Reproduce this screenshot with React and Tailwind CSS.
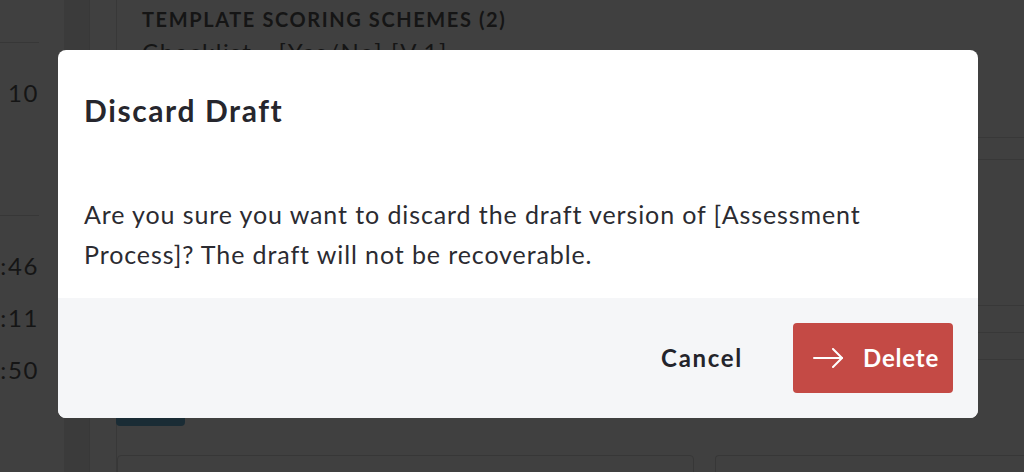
import { useState } from "react";

function ArrowIcon() {
  return (
    <svg width="30" height="20" viewBox="0 0 30 20" fill="none" stroke="white" strokeWidth="2" strokeLinecap="round" strokeLinejoin="round">
      <path d="M1 10H29" />
      <path d="M20 1L29 10L20 19" />
    </svg>
  );
}

function Backdrop() {
  return (
    <div className="flex h-full w-full text-[#151515]">
      {/* left time column */}
      <div className="w-[64px] shrink-0 pr-[25px]">
        <div className="h-[43px] border-b border-[#373737]" />
        <div className="pt-[35px] text-right text-[24px] leading-[30px] h-[172px]">10</div>
        <div className="border-b border-[#373737]" />
        <div className="pt-[24px] text-right text-[24px] leading-[52px]">
          <div>:46</div>
          <div>:11</div>
          <div>:50</div>
        </div>
      </div>
      <div className="w-[26px] shrink-0 bg-[#3b3b3b] border-r border-[#383838]" />
      <div className="w-[27px] shrink-0 border-r border-[#383838]" />
      {/* main content */}
      <div className="flex-1 flex flex-col">
        <div className="shrink-0 pl-[25px] pt-[7px]">
          <div className="text-[20px] font-bold leading-[24px]">TEMPLATE SCORING SCHEMES (2)</div>
          <div className="text-[24px] leading-[30px] mt-[6px]">Checklist - [Yes/No] [V.1]</div>
        </div>
        <div className="shrink-0 mt-[70px] h-[23px] border-y border-[#383838]" />
        <div className="shrink-0 mt-[145px] h-[28px] border-y border-[#383838]" />
        <div className="shrink-0 h-[27px] border-b border-[#383838]" />
        <div className="shrink-0 mt-[40px] ml-[-1px] w-[69px] h-[26px] rounded-[4px] bg-[#1a2c35]" />
        <div className="shrink-0 mt-[29px] flex gap-[21px]">
          <div className="w-[577px] h-[40px] rounded-[4px] border border-[#373737]" />
          <div className="flex-1 h-[40px] rounded-l-[4px] border border-r-0 border-[#373737]" />
        </div>
      </div>
    </div>
  );
}

export default function App() {
  const [open] = useState(true);

  return (
    <div
      className="relative w-full h-[472px] overflow-hidden bg-[#404040] tracking-[1.6px]"
      style={{ fontFamily: "Lato, 'Noto Sans', sans-serif" }}
    >
      <Backdrop />
      {open && (
        <div className="absolute left-[58px] top-[50px] w-[920px] rounded-[8px] overflow-hidden bg-white">
          <div className="px-[26px] pt-[42px] pb-[24px]">
            <h2 className="text-[30px] font-bold leading-[36px] text-[#26262d]">Discard Draft</h2>
            <p className="mt-[66px] text-[25px] leading-[40px] tracking-[0.9px] text-[#2b2b31]">
              Are you sure you want to discard the draft version of [Assessment Process]? The draft will not be recoverable.
            </p>
          </div>
          <div className="h-[120px] bg-[#f5f6f8] flex items-center justify-end pr-[25px] gap-[50px]">
            <button className="text-[24px] font-bold text-[#24242b] tracking-[1.7px]">Cancel</button>
            <button className="w-[160px] h-[70px] rounded-[4px] bg-[#c44a45] flex items-center pl-[20px] gap-[20px] text-white text-[24px] font-bold tracking-[0.8px]">
              <ArrowIcon />
              <span>Delete</span>
            </button>
          </div>
        </div>
      )}
    </div>
  );
}
